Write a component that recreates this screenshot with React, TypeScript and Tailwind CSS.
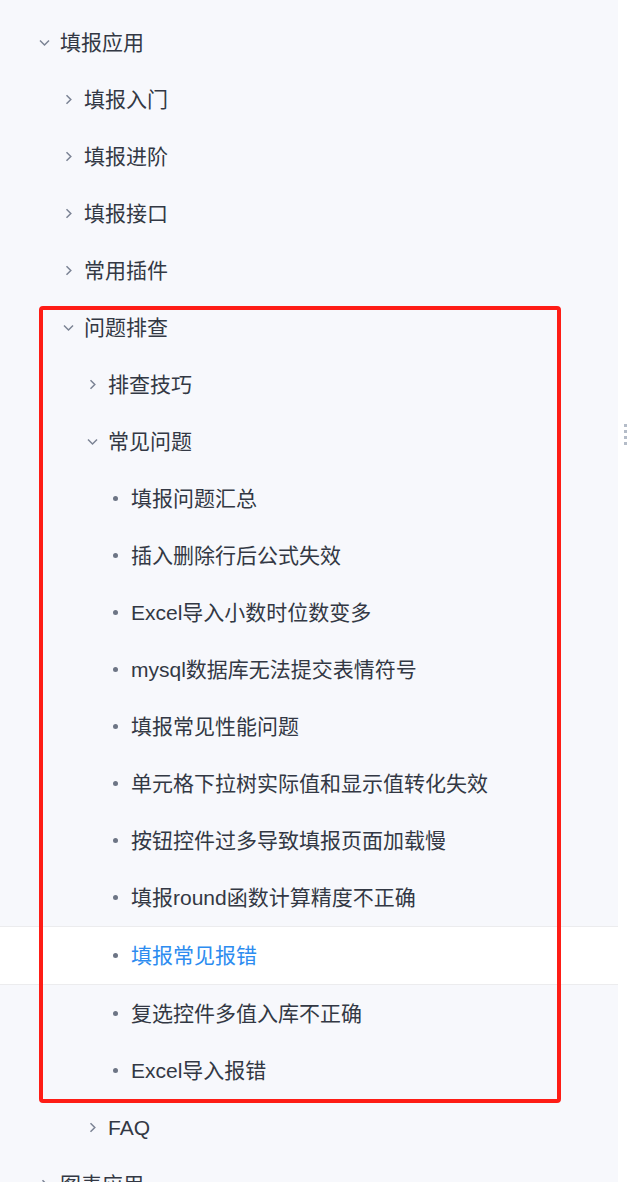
import { ReactNode } from "react"

type Node = {
  label: string
  level: number
  kind: "open" | "closed" | "leaf"
  active?: boolean
}

const NODES: Node[] = [
  { label: "填报应用", level: 0, kind: "open" },
  { label: "填报入门", level: 1, kind: "closed" },
  { label: "填报进阶", level: 1, kind: "closed" },
  { label: "填报接口", level: 1, kind: "closed" },
  { label: "常用插件", level: 1, kind: "closed" },
  { label: "问题排查", level: 1, kind: "open" },
  { label: "排查技巧", level: 2, kind: "closed" },
  { label: "常见问题", level: 2, kind: "open" },
  { label: "填报问题汇总", level: 3, kind: "leaf" },
  { label: "插入删除行后公式失效", level: 3, kind: "leaf" },
  { label: "Excel导入小数时位数变多", level: 3, kind: "leaf" },
  { label: "mysql数据库无法提交表情符号", level: 3, kind: "leaf" },
  { label: "填报常见性能问题", level: 3, kind: "leaf" },
  { label: "单元格下拉树实际值和显示值转化失效", level: 3, kind: "leaf" },
  { label: "按钮控件过多导致填报页面加载慢", level: 3, kind: "leaf" },
  { label: "填报round函数计算精度不正确", level: 3, kind: "leaf" },
  { label: "填报常见报错", level: 3, kind: "leaf", active: true },
  { label: "复选控件多值入库不正确", level: 3, kind: "leaf" },
  { label: "Excel导入报错", level: 3, kind: "leaf" },
  { label: "FAQ", level: 2, kind: "closed" },
  { label: "图表应用", level: 0, kind: "closed" },
]

const PAD = ["pl-[40px]", "pl-[64px]", "pl-[88px]", "pl-[112px]"]

function Marker({ kind }: { kind: Node["kind"] }): ReactNode {
  if (kind === "leaf") {
    return (
      <span className="w-[19px] flex items-center">
        <span className="ml-[1px] w-[5px] h-[5px] rounded-full bg-[#6d7585]" />
      </span>
    )
  }
  return (
    <span className="w-[20px] flex items-center">
      <svg className="-ml-[1px]" width="11" height="11" viewBox="0 0 11 11" fill="none" stroke="#7b8394" strokeWidth="1.5">
        {kind === "open" ? <path d="M1 3.5 L5.5 8 L10 3.5" /> : <path d="M3.5 1.3 L7.8 5.5 L3.5 9.7" />}
      </svg>
    </span>
  )
}

export default function App() {
  return (
    <div
      className="relative w-[633px] h-[1182px] overflow-hidden bg-white flex"
      style={{ fontFamily: '"Liberation Sans", "Noto Sans CJK SC", sans-serif' }}
    >
      <aside className="w-[618px] h-full bg-[#f7f8fc] pt-[14px]">
        {NODES.map((n, i) => (
          <div
            key={i}
            className={
              n.active
                ? `h-[59px] flex items-center bg-white border-y border-[#ececee] ${PAD[n.level]}`
                : `h-[57px] flex items-center ${PAD[n.level]}`
            }
          >
            <Marker kind={n.kind} />
            <span className={`text-[21px] whitespace-nowrap ${n.active ? "text-[#2d8cf0]" : "text-[#333844]"}`}>{n.label}</span>
          </div>
        ))}
      </aside>
      <div className="flex-1 flex flex-col items-center pt-[424px] gap-[3px]">
        <span className="w-[3px] h-[3px] bg-[#b4bcc8]" />
        <span className="w-[3px] h-[3px] bg-[#b4bcc8]" />
        <span className="w-[3px] h-[3px] bg-[#b4bcc8]" />
        <span className="w-[3px] h-[3px] bg-[#b4bcc8]" />
      </div>
      <div className="absolute left-[39px] top-[306px] w-[522px] h-[797px] border-[4px] border-[#fe1d16] rounded-[4px]" />
    </div>
  )
}
